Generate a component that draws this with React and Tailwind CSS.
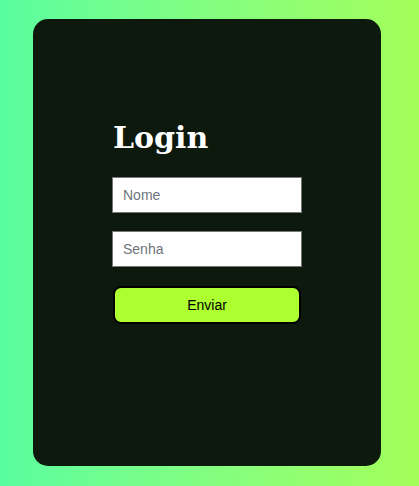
export default function App() {
  return (
    <div className="min-h-screen w-full bg-gradient-to-r from-[#58fd9f] to-[#a3fe58] px-[33px] pt-[19px] pb-[20px]">
      <div className="flex h-[447px] w-[348px] flex-col items-center rounded-[15px] bg-[#0c190c] pt-[100px]">
        <form className="flex w-[190px] flex-col" onSubmit={(e) => e.preventDefault()}>
          <h1 className="mb-[20px] pl-[1px] text-[30px] leading-[38px] font-bold text-white [font-family:'DejaVu_Serif',serif]">
            Login
          </h1>
          <input
            type="text"
            placeholder="Nome"
            className="h-[36px] w-full border border-[#767676] bg-white px-[10px] text-[14px] text-black outline-none placeholder:text-[#6e737d] [font-family:'Liberation_Sans',Arial,sans-serif]"
          />
          <input
            type="password"
            placeholder="Senha"
            className="mt-[18px] h-[36px] w-full border border-[#767676] bg-white px-[10px] text-[14px] text-black outline-none placeholder:text-[#6e737d] [font-family:'Liberation_Sans',Arial,sans-serif]"
          />
          <button
            type="submit"
            className="mt-[19px] ml-[1px] h-[38px] w-[188px] rounded-[8px] border-2 border-black bg-[#adff2f] text-[14px] text-black [font-family:'Liberation_Sans',Arial,sans-serif]"
          >
            Enviar
          </button>
        </form>
      </div>
    </div>
  );
}
